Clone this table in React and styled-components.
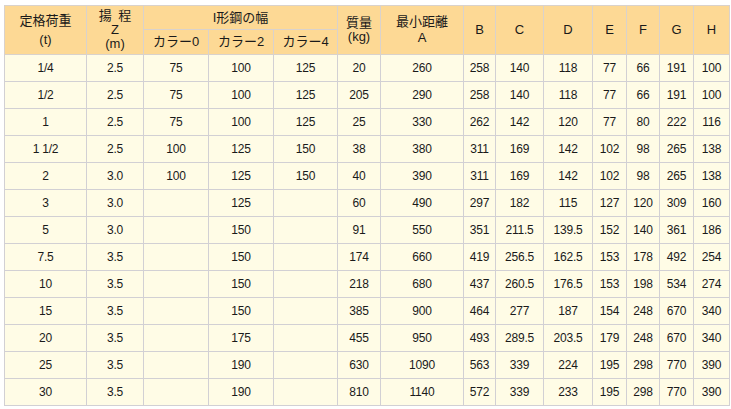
import styled, { createGlobalStyle } from "styled-components"

const GlobalStyle = createGlobalStyle`
  html, body {
    margin: 0;
    padding: 0;
    background: #ffffff;
  }
`

const Page = styled.div`
  padding: 5px 0 0 4px;
`

const Table = styled.table`
  width: 726px;
  table-layout: fixed;
  border-collapse: collapse;
  border: 1px solid #cdcbd6;
  font-family: "Liberation Sans", "Noto Sans CJK JP", sans-serif;
  color: #1a1a1a;
`

const Th = styled.th`
  background: #fdd995;
  border: 1px solid #ddd3c4;
  border-color: #d9d2cc;
  font-weight: normal;
  font-size: 13px;
  line-height: 14px;
  text-align: center;
  vertical-align: middle;
  padding: 0;
  height: ${(p) => p.$h || 23}px;
`

const Line = styled.span`
  display: block;
  margin-top: ${(p) => p.$gap || 0}px;
`

const Td = styled.td`
  background: #fffce6;
  border: 1px solid #d2d0d4;
  font-size: 12px;
  text-align: center;
  vertical-align: middle;
  padding: 0;
  height: 26px;
  letter-spacing: -0.2px;
`

const widths = [82, 57, 65, 65, 64, 43, 83, 32, 48, 49, 34, 33, 34, 36]

const rows = [
  ["1/4", "2.5", "75", "100", "125", "20", "260", "258", "140", "118", "77", "66", "191", "100"],
  ["1/2", "2.5", "75", "100", "125", "205", "290", "258", "140", "118", "77", "66", "191", "100"],
  ["1", "2.5", "75", "100", "125", "25", "330", "262", "142", "120", "77", "80", "222", "116"],
  ["1 1/2", "2.5", "100", "125", "150", "38", "380", "311", "169", "142", "102", "98", "265", "138"],
  ["2", "3.0", "100", "125", "150", "40", "390", "311", "169", "142", "102", "98", "265", "138"],
  ["3", "3.0", "", "125", "", "60", "490", "297", "182", "115", "127", "120", "309", "160"],
  ["5", "3.0", "", "150", "", "91", "550", "351", "211.5", "139.5", "152", "140", "361", "186"],
  ["7.5", "3.5", "", "150", "", "174", "660", "419", "256.5", "162.5", "153", "178", "492", "254"],
  ["10", "3.5", "", "150", "", "218", "680", "437", "260.5", "176.5", "153", "198", "534", "274"],
  ["15", "3.5", "", "150", "", "385", "900", "464", "277", "187", "154", "248", "670", "340"],
  ["20", "3.5", "", "175", "", "455", "950", "493", "289.5", "203.5", "179", "248", "670", "340"],
  ["25", "3.5", "", "190", "", "630", "1090", "563", "339", "224", "195", "298", "770", "390"],
  ["30", "3.5", "", "190", "", "810", "1140", "572", "339", "233", "195", "298", "770", "390"],
]

const letters = ["B", "C", "D", "E", "F", "G", "H"]

export default function App() {
  return (
    <Page>
      <GlobalStyle />
      <Table>
        <colgroup>
          {widths.map((w, i) => (
            <col key={i} style={{ width: w }} />
          ))}
        </colgroup>
        <thead>
          <tr>
            <Th rowSpan={2}>
              <Line>定格荷重</Line>
              <Line $gap={5}>(t)</Line>
            </Th>
            <Th rowSpan={2}>
              <Line>揚&ensp;程</Line>
              <Line>Z</Line>
              <Line>(m)</Line>
            </Th>
            <Th colSpan={3} $h={23}>I形鋼の幅</Th>
            <Th rowSpan={2}>
              <Line>質量</Line>
              <Line>(kg)</Line>
            </Th>
            <Th rowSpan={2}>
              <Line>最小距離</Line>
              <Line $gap={2}>A</Line>
            </Th>
            {letters.map((l) => (
              <Th key={l} rowSpan={2}>{l}</Th>
            ))}
          </tr>
          <tr>
            <Th $h={24}>カラー0</Th>
            <Th $h={24}>カラー2</Th>
            <Th $h={24}>カラー4</Th>
          </tr>
        </thead>
        <tbody>
          {rows.map((r, i) => (
            <tr key={i}>
              {r.map((c, j) => (
                <Td key={j}>{c}</Td>
              ))}
            </tr>
          ))}
        </tbody>
      </Table>
    </Page>
  )
}
